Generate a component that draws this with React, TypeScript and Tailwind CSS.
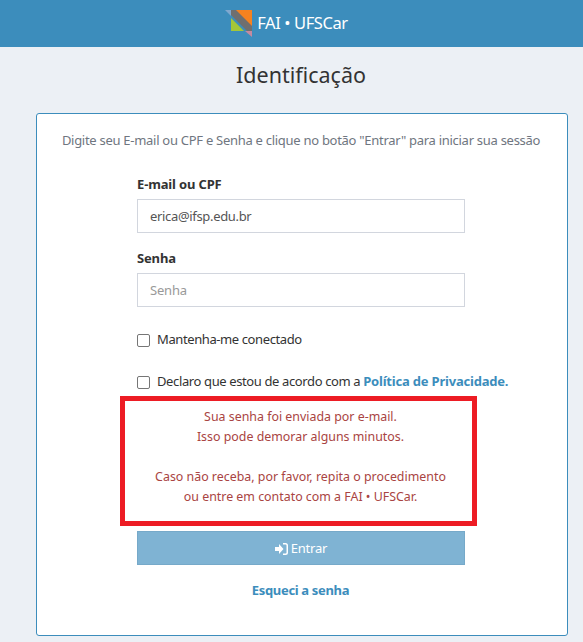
const font = "font-['Noto_Sans','Open_Sans',sans-serif]";

function Logo() {
  return (
    <svg width="28" height="28" viewBox="0 0 28 28" className="shrink-0">
      <polygon points="0,0 6,0 6,6" fill="#7fa8cf" />
      <polygon points="6,0 27,0 27,21" fill="#f58220" />
      <polygon points="6,8 6,21 19,21" fill="#a4c639" />
      <polygon points="6,0 11,0 27,16 27,21 22,21 6,5" fill="#6f6f6f" />
      <polygon points="20,21 27,21 27,27" fill="#c58aa0" />
    </svg>
  );
}

function Check() {
  return <span className="w-[13px] h-[13px] shrink-0 border border-[#767676] rounded-[2px] bg-white" />;
}

export default function App() {
  return (
    <div className={`h-[642px] overflow-hidden bg-[#ecf0f5] ${font} text-[14px] text-[#333]`}>
      {/* Header */}
      <div className="h-[47px] bg-[#3c8dbc] flex items-center justify-center gap-[4px] pr-[10px] text-white">
        <Logo />
        <span className="text-[16.5px] tracking-[-0.4px]">FAI • UFSCar</span>
      </div>

      <h1 className="text-[21.5px] text-center leading-[30px] mt-[13px] pl-[19px] text-[#333]">Identificação</h1>

      {/* Card */}
      <div className="mt-[23px] ml-[36px] w-[532px] h-[523px] bg-white border border-[#3c8dbc] rounded-[3px] pt-[16px]">
        <p className="text-center pr-[2px] text-[13px] tracking-[-0.28px] leading-[20px] text-[#6f7680] whitespace-nowrap">
          Digite seu E-mail ou CPF e Senha e clique no botão "Entrar" para iniciar sua sessão
        </p>

        <div className="ml-[84px] w-[356px]">
          <div className="w-[328px] ml-[16px]">
            <label className="block mt-[24px] font-bold text-[13px] tracking-[-0.15px] leading-[20px] text-[#333]">E-mail ou CPF</label>
            <input
              readOnly
              value="erica@ifsp.edu.br"
              className="block mt-[5px] w-full h-[34px] border border-[#d2d6de] px-[12px] text-[13px] tracking-[-0.33px] text-[#555] outline-none"
            />
            <label className="block mt-[15px] font-bold text-[13px] tracking-[-0.15px] leading-[20px] text-[#333]">Senha</label>
            <input
              readOnly
              placeholder="Senha"
              className="block mt-[5px] w-full h-[34px] border border-[#d2d6de] px-[12px] text-[13px] tracking-[-0.2px] text-[#555] placeholder:text-[#999] outline-none"
            />
            <label className="flex items-center gap-[7px] mt-[23px] h-[20px] text-[13px] tracking-[-0.4px] text-[#333]">
              <Check />
              Mantenha-me conectado
            </label>
            <label className="flex items-center gap-[7px] mt-[22px] h-[20px] text-[13px] tracking-[-0.38px] text-[#333] whitespace-nowrap">
              <Check />
              <span>Declaro que estou de acordo com a <a className="font-bold text-[#3c8dbc] tracking-[-0.2px]">Política de Privacidade.</a></span>
            </label>
          </div>

          {/* Alert */}
          <div className="-ml-[1px] mt-[4px] h-[130px] border-[5px] border-[#ed1c24] pl-[4px] text-center text-[12.4px] leading-[20px] text-[#a94442] pt-[6px]">
            <p>Sua senha foi enviada por e-mail.</p>
            <p>Isso pode demorar alguns minutos.</p>
            <p>&nbsp;</p>
            <p>Caso não receba, por favor, repita o procedimento</p>
            <p>ou entre em contato com a FAI • UFSCar.</p>
          </div>

          <button className="ml-[16px] mt-[5px] w-[328px] h-[34px] pt-px bg-[#7fb3d3] border border-[#76a9c9] text-white text-[13px] tracking-[-0.2px] flex items-center justify-center gap-[3px]">
            <svg width="13" height="12" viewBox="0 0 13 12" fill="currentColor">
              <path d="M0 4h4V1l4.5 5L4 11V8H0z" />
              <path d="M8 0h2.5A2.5 2.5 0 0 1 13 2.5v7a2.5 2.5 0 0 1-2.5 2.5H8v-1.5h2.5a1 1 0 0 0 1-1v-7a1 1 0 0 0-1-1H8z" />
            </svg>
            Entrar
          </button>
          <div className="mt-[14px] text-center pl-[3px]">
            <a className="font-bold text-[13px] tracking-[-0.33px] leading-[20px] text-[#3c8dbc]">Esqueci a senha</a>
          </div>
        </div>
      </div>
    </div>
  );
}
